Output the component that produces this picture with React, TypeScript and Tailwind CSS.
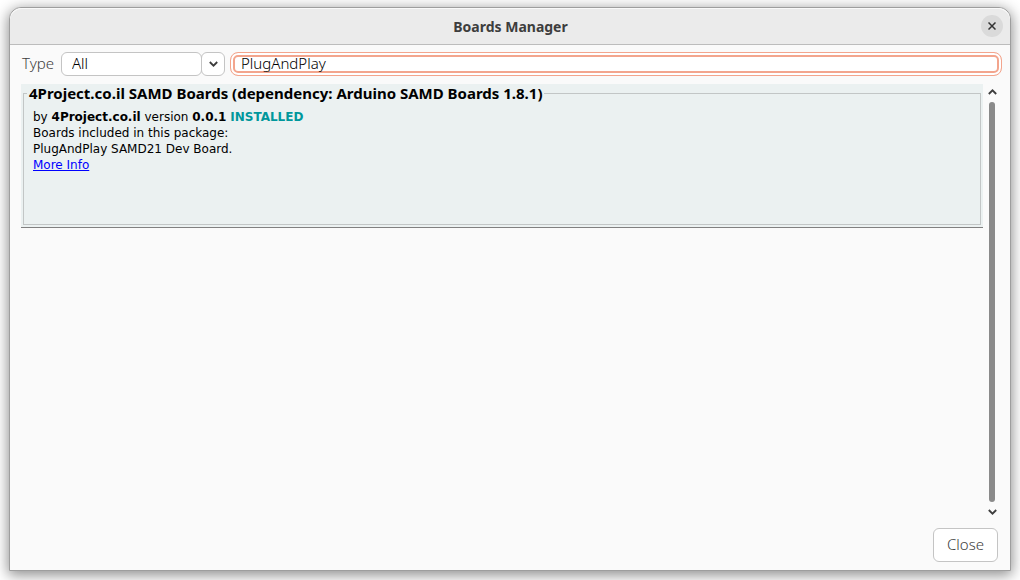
import { useState } from "react";

function Chevron({ up = false }: { up?: boolean }) {
  return (
    <svg width="9" height="6" viewBox="0 0 9 6" fill="none" stroke="#3d3d3d" strokeWidth="1.8" aria-hidden="true">
      <path d={up ? "M0.8 5 L4.5 1.3 L8.2 5" : "M0.8 1 L4.5 4.7 L8.2 1"} />
    </svg>
  );
}

function TitleBar() {
  return (
    <header className="grid h-[37px] shrink-0 grid-cols-[1fr_auto_1fr] items-center rounded-t-xl border-b border-[#bcbcbc] bg-[#ebebeb] pr-[7px] pl-2 shadow-[inset_0_1px_0_#f9f9f9]">
      <h1 className="col-start-2 pt-px font-['Noto_Sans',sans-serif] text-sm font-bold text-[#3d3d3d]">
        Boards Manager
      </h1>
      <button
        type="button"
        aria-label="Close window"
        className="flex size-[22px] items-center justify-center justify-self-end rounded-full bg-[#dadada]"
      >
        <svg width="8" height="8" viewBox="0 0 8 8" stroke="#333333" strokeWidth="1.5" aria-hidden="true">
          <path d="M0.5 0.5 L7.5 7.5 M7.5 0.5 L0.5 7.5" />
        </svg>
      </button>
    </header>
  );
}

function Filters() {
  const [type, setType] = useState("All");
  const [query, setQuery] = useState("PlugAndPlay");
  return (
    <div className="flex h-6 items-center pr-2 pl-3 font-['Noto_Sans',sans-serif] text-[15px] leading-[22px] font-light">
      <label htmlFor="type" className="w-[39px] pb-0.5 text-[#3d3d3d]">
        Type
      </label>
      <div className="relative flex h-6">
        <span className="w-[141px] rounded-md border border-[#c4c4c4] bg-white" />
        <span className="-ml-px flex w-6 items-center justify-center rounded-md border border-[#c4c4c4] bg-white">
          <Chevron />
        </span>
        <select
          id="type"
          value={type}
          onChange={(e) => setType(e.target.value)}
          className="absolute inset-0 appearance-none bg-transparent pb-0.5 pl-[11px] text-black outline-none"
        >
          <option>All</option>
          <option>Updatable</option>
        </select>
      </div>
      <input
        type="text"
        aria-label="Filter your search"
        value={query}
        onChange={(e) => setQuery(e.target.value)}
        className="ml-[5px] h-6 min-w-0 flex-1 rounded-lg border border-[#f3a58d] bg-white px-[10px] pb-0.5 text-black shadow-[inset_0_0_0_2px_#ffffff,inset_0_0_0_4px_#f3a58d] outline-none"
      />
    </div>
  );
}

function BoardCard() {
  return (
    <article className="border-b border-[#808080] bg-[#ebf1f1] px-0.5 pb-0.5">
      <fieldset className="h-[141px] border border-[#c2c6c6] px-[9px] pt-[7px] font-['DejaVu_Sans',sans-serif] text-xs leading-4 text-black">
        <legend className="-ml-[6px] px-0.5 font-['Noto_Sans',sans-serif] text-[15px] leading-[18px] font-bold">
          4Project.co.il SAMD Boards (dependency: Arduino SAMD Boards 1.8.1)
        </legend>
        <p>
          by <b>4Project.co.il</b> version <b>0.0.1</b> <b className="text-[#00979c]">INSTALLED</b>
        </p>
        <p>Boards included in this package:</p>
        <p>PlugAndPlay SAMD21 Dev Board.</p>
        <a href="#more-info" className="text-[#0000ff] underline">
          More Info
        </a>
      </fieldset>
    </article>
  );
}

function ScrollBar() {
  return (
    <div className="flex w-[18px] shrink-0 flex-col items-center pt-[5px] pb-[5px]">
      <button type="button" aria-label="Scroll up">
        <Chevron up />
      </button>
      <div className="my-[7px] w-1.5 flex-1 rounded-sm bg-[#8a8a8a]" />
      <button type="button" aria-label="Scroll down">
        <Chevron />
      </button>
    </div>
  );
}

export default function App() {
  return (
    <div className="flex h-screen bg-white px-[9px] pt-[7px] pb-[9px]">
      <main className="flex min-w-0 flex-1 flex-col rounded-t-xl border border-[#9e9e9e] bg-[#fafafa] shadow-[0_3px_14px_1px_rgba(0,0,0,0.45)]">
        <TitleBar />
        <div className="flex min-h-0 flex-1 flex-col pt-[7px] pb-2">
          <Filters />
          <div className="mt-2 flex min-h-0 flex-1 pr-[9px] pl-[11px]">
            <section className="min-w-0 flex-1">
              <BoardCard />
            </section>
            <ScrollBar />
          </div>
          <footer className="mt-2 flex justify-end pr-3">
            <button
              type="button"
              className="h-[34px] rounded-md border border-[#c4c4c4] bg-white px-[13px] pb-0.5 font-['Noto_Sans',sans-serif] text-[15px] font-light text-[#3d3d3d]"
            >
              Close
            </button>
          </footer>
        </div>
      </main>
    </div>
  );
}
